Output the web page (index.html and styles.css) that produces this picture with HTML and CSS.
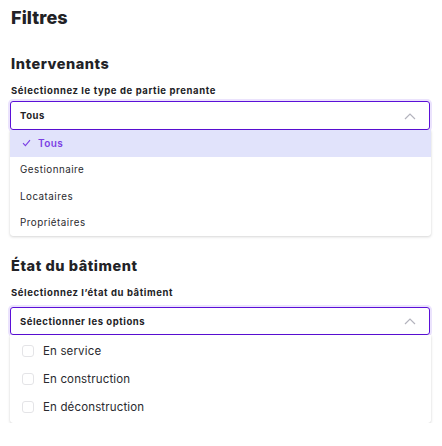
FILE: index.html
```html
<!DOCTYPE html>
<html lang="fr">
<head>
<meta charset="utf-8">
<link rel="stylesheet" href="styles.css">
</head>
<body>
<div class="page">
  <h1 class="title">Filtres</h1>

  <section class="section first">
    <h2 class="section-title">Intervenants</h2>
    <div class="label">Sélectionnez le type de partie prenante</div>
    <div class="select">
      <span class="select-value">Tous</span>
      <svg class="chevron" width="12" height="8" viewBox="0 0 12 8"><path d="M1 7 L6 2 L11 7" fill="none" stroke="#b3b3bd" stroke-width="1.2"/></svg>
    </div>
    <ul class="menu">
      <li class="item selected">
        <svg class="check" width="9" height="8" viewBox="0 0 9 8"><path d="M1 4.2 L3.4 6.6 L8 1.2" fill="none" stroke="#7b3fe4" stroke-width="1.1"/></svg>
        <span>Tous</span>
      </li>
      <li class="item">Gestionnaire</li>
      <li class="item">Locataires</li>
      <li class="item">Propriétaires</li>
    </ul>
  </section>

  <section class="section second">
    <h2 class="section-title">État du bâtiment</h2>
    <div class="label">Sélectionnez l’état du bâtiment</div>
    <div class="select">
      <span class="select-value">Sélectionner les options</span>
      <svg class="chevron" width="12" height="8" viewBox="0 0 12 8"><path d="M1 7 L6 2 L11 7" fill="none" stroke="#b3b3bd" stroke-width="1.2"/></svg>
    </div>
    <ul class="menu checks">
      <li class="citem"><span class="box"></span>En service</li>
      <li class="citem"><span class="box"></span>En construction</li>
      <li class="citem"><span class="box"></span>En déconstruction</li>
    </ul>
  </section>
</div>
</body>
</html>
```

FILE: styles.css
```css
* { box-sizing: border-box; }
html, body { margin: 0; padding: 0; background: #fff; }
body {
  font-family: "Inter", "Noto Sans", sans-serif;
  color: #222226;
}
.page {
  padding: 7px 12px 0 10px;
  display: flex;
  flex-direction: column;
}
.title {
  margin: 0 0 0 1px;
  font-size: 18px;
  font-weight: 800;
  line-height: 22px;
  letter-spacing: 0.1px;
}
.section { display: flex; flex-direction: column; }
.section.first { margin-top: 26px; }
.section.second { margin-top: 21px; }
.section-title {
  margin: 0 0 0 1px;
  font-size: 14.5px;
  font-weight: 800;
  line-height: 18px;
  letter-spacing: 0.55px;
}
.label {
  margin: 12px 0 0 1px;
  font-size: 9.5px;
  font-weight: 700;
  line-height: 12px;
  letter-spacing: 0.6px;
}
.select {
  height: 29px;
  border: 1.5px solid #5b10d8;
  border-radius: 3px;
  box-shadow: 0 0 0 2px #ebe3fd;
  display: flex;
  align-items: center;
  justify-content: space-between;
  padding: 0 13px 0 9px;
}
.first .select { margin-top: 4px; }
.second .select { margin-top: 8px; height: 28px; }
.select-value {
  font-size: 9.5px;
  font-weight: 700;
  letter-spacing: 0.55px;
}
.chevron { display: block; }
.menu {
  list-style: none;
  margin: 0;
  padding: 0;
  width: 421px;
  background: #fff;
  border-radius: 0 0 3px 3px;
  box-shadow: 0 1px 3px rgba(0,0,0,0.16), 0 0 1px rgba(0,0,0,0.1);
}
.item {
  height: 26.5px;
  display: flex;
  align-items: center;
  padding-left: 10px;
  font-size: 9.8px;
  font-weight: 400;
  letter-spacing: 0.5px;
  color: #2a2a2e;
}
.item.selected {
  background: #e1e3fb;
  color: #7b3fe4;
  font-weight: 600;
  font-size: 10px;
  letter-spacing: 0.4px;
  padding-left: 12px;
}
.check { margin-right: 7px; }
.checks { padding: 2px 0 2px; }
.citem {
  height: 28px;
  display: flex;
  align-items: center;
  padding-left: 12px;
  font-size: 11.5px;
  letter-spacing: 0.15px;
  color: #2a2a2e;
}
.box {
  width: 12px;
  height: 12px;
  border: 1px solid #e4e4e7;
  border-radius: 3px;
  margin-right: 9px;
}
```
